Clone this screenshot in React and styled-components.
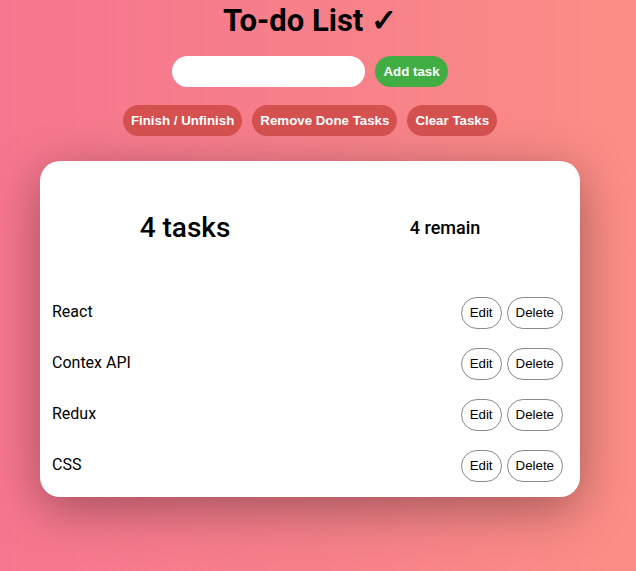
import React from "react";
import styled, { createGlobalStyle } from "styled-components";

const Global = createGlobalStyle`
  html, body { margin: 0; padding: 0; }
  body {
    min-height: 571px;
    background: linear-gradient(to right, #f7768f 0%, #f6808a 50%, #fc8e85 100%);
    font-family: Roboto, "Liberation Sans", sans-serif;
  }
`;

const Page = styled.div`
  display: flex;
  flex-direction: column;
  align-items: center;
  padding: 2px 16px 0 0;
`;

const Title = styled.h1`
  margin: 0;
  font-family: Roboto, sans-serif;
  font-weight: 700;
  font-size: 31px;
  line-height: 38px;
  color: #000;
`;

const InputRow = styled.div`
  display: flex;
  gap: 10px;
  margin-top: 16px;
`;

const TextInput = styled.input`
  width: 193px;
  height: 31px;
  box-sizing: border-box;
  border: none;
  border-radius: 16px;
  background: #fff;
  outline: none;
  padding: 0 12px;
`;

const PillButton = styled.button`
  height: 31px;
  border: none;
  border-radius: 16px;
  padding: 0 8px;
  background: ${(p) => p.$bg};
  color: #fff;
  font-family: "Liberation Sans", Arial, sans-serif;
  font-weight: 700;
  font-size: 13.3px;
  cursor: pointer;
`;

const ActionRow = styled.div`
  display: flex;
  gap: 10px;
  margin-top: 18px;
`;

const Card = styled.div`
  margin-top: 25px;
  width: 540px;
  box-sizing: border-box;
  background: #fff;
  border-radius: 20px;
  padding: 10px 17px 6px 12px;
  box-shadow: 0 12px 50px rgba(0, 0, 0, 0.35);
`;

const Header = styled.div`
  height: 116px;
  box-sizing: border-box;
  padding-bottom: 4px;
  display: flex;
  align-items: center;
  justify-content: space-around;
  margin: 0 -7px 0 -2px;
`;

const Count = styled.div`
  font-size: ${(p) => p.$size}px;
  font-weight: 500;
  color: #000;
`;

const TaskList = styled.ul`
  list-style: none;
  margin: 0;
  padding: 0;
`;

const TaskRow = styled.li`
  height: 51px;
  display: flex;
  align-items: center;
  justify-content: space-between;
`;

const TaskName = styled.span`
  font-size: 16px;
  color: #000;
  margin-top: -2px;
`;

const RowButtons = styled.div`
  display: flex;
  gap: 5px;
`;

const OutlineButton = styled.button`
  height: 32px;
  box-sizing: border-box;
  padding: 0 8px;
  border: 1px solid #8a8a8a;
  border-radius: 16px;
  background: #fff;
  color: #000;
  font-family: "Liberation Sans", Arial, sans-serif;
  font-size: 13.3px;
  cursor: pointer;
`;

const tasks = ["React", "Contex API", "Redux", "CSS"];

export default function App() {
  return (
    <>
      <Global />
      <Page>
        <Title>To-do List ✓</Title>
        <InputRow>
          <TextInput />
          <PillButton $bg="#40ae42">Add task</PillButton>
        </InputRow>
        <ActionRow>
          <PillButton $bg="#d55150">Finish / Unfinish</PillButton>
          <PillButton $bg="#d55150">Remove Done Tasks</PillButton>
          <PillButton $bg="#d55150">Clear Tasks</PillButton>
        </ActionRow>
        <Card>
          <Header>
            <Count $size={28}>4 tasks</Count>
            <Count $size={18}>4 remain</Count>
          </Header>
          <TaskList>
            {tasks.map((t) => (
              <TaskRow key={t}>
                <TaskName>{t}</TaskName>
                <RowButtons>
                  <OutlineButton>Edit</OutlineButton>
                  <OutlineButton>Delete</OutlineButton>
                </RowButtons>
              </TaskRow>
            ))}
          </TaskList>
        </Card>
      </Page>
    </>
  );
}
